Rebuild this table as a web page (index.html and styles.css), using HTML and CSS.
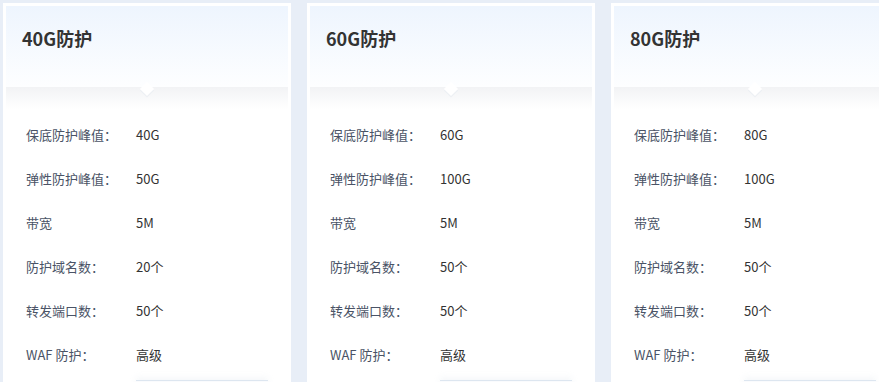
FILE: index.html
```html
<!DOCTYPE html>
<html lang="zh-CN">
<head>
<meta charset="utf-8">
<title>防护套餐</title>
<link rel="stylesheet" href="styles.css">
</head>
<body>
<div class="cards">
  <div class="card">
    <div class="card-head"><h3 class="card-title">40G防护</h3><span class="notch"></span></div>
    <div class="card-body">
      <div class="row"><span class="label">保底防护峰值：</span><span class="value">40G</span></div>
      <div class="row"><span class="label">弹性防护峰值：</span><span class="value">50G</span></div>
      <div class="row"><span class="label">带宽</span><span class="value">5M</span></div>
      <div class="row"><span class="label">防护域名数：</span><span class="value">20个</span></div>
      <div class="row"><span class="label">转发端口数：</span><span class="value">50个</span></div>
      <div class="row"><span class="label">WAF 防护：</span><span class="value">高级</span></div>
      <div class="btn"></div>
    </div>
  </div>
  <div class="card">
    <div class="card-head"><h3 class="card-title">60G防护</h3><span class="notch"></span></div>
    <div class="card-body">
      <div class="row"><span class="label">保底防护峰值：</span><span class="value">60G</span></div>
      <div class="row"><span class="label">弹性防护峰值：</span><span class="value">100G</span></div>
      <div class="row"><span class="label">带宽</span><span class="value">5M</span></div>
      <div class="row"><span class="label">防护域名数：</span><span class="value">50个</span></div>
      <div class="row"><span class="label">转发端口数：</span><span class="value">50个</span></div>
      <div class="row"><span class="label">WAF 防护：</span><span class="value">高级</span></div>
      <div class="btn"></div>
    </div>
  </div>
  <div class="card">
    <div class="card-head"><h3 class="card-title">80G防护</h3><span class="notch"></span></div>
    <div class="card-body">
      <div class="row"><span class="label">保底防护峰值：</span><span class="value">80G</span></div>
      <div class="row"><span class="label">弹性防护峰值：</span><span class="value">100G</span></div>
      <div class="row"><span class="label">带宽</span><span class="value">5M</span></div>
      <div class="row"><span class="label">防护域名数：</span><span class="value">50个</span></div>
      <div class="row"><span class="label">转发端口数：</span><span class="value">50个</span></div>
      <div class="row"><span class="label">WAF 防护：</span><span class="value">高级</span></div>
      <div class="btn"></div>
    </div>
  </div>
</div>
</body>
</html>
```
FILE: styles.css
```css
html, body {
  margin: 0;
  padding: 0;
  height: 100%;
  overflow: hidden;
}
body {
  background: #e8eef7;
  font-family: "Noto Sans CJK SC", "Noto Sans", sans-serif;
}
.cards {
  display: flex;
  gap: 16px;
  padding: 3px 0 0 3px;
  width: max-content;
}
.card {
  width: 282px;
  flex: none;
  background: #fff;
  padding: 3px 3px 0 3px;
  height: 400px;
}
.card-head {
  position: relative;
  height: 81px;
  background: linear-gradient(#eef5fe, #fdfeff);
  padding-left: 16px;
  box-sizing: border-box;
}
.card-title {
  margin: 0;
  font-size: 18px;
  font-weight: 700;
  color: #333;
  line-height: 64px;
}
.notch {
  position: absolute;
  left: 50%;
  bottom: -7px;
  width: 10px;
  height: 10px;
  margin-left: -5px;
  background: #fff;
  transform: rotate(45deg);
  box-shadow: 1px 1px 0 #eceff3;
  z-index: 1;
}
.card-body {
  background: linear-gradient(#f2f3f5, #fff 22px);
  padding: 25px 0 0 20px;
}
.row {
  display: flex;
  height: 44px;
  align-items: center;
  font-size: 13px;
}
.label {
  width: 110px;
  color: #4a5366;
}
.value {
  color: #333;
}
.btn {
  margin: 4px 0 0 110px;
  width: 132px;
  height: 30px;
  border-top: 1px solid #dde6f0;
  background: #fafbfd;
  box-shadow: 0 -3px 6px rgba(225, 232, 240, 0.3);
}
```
